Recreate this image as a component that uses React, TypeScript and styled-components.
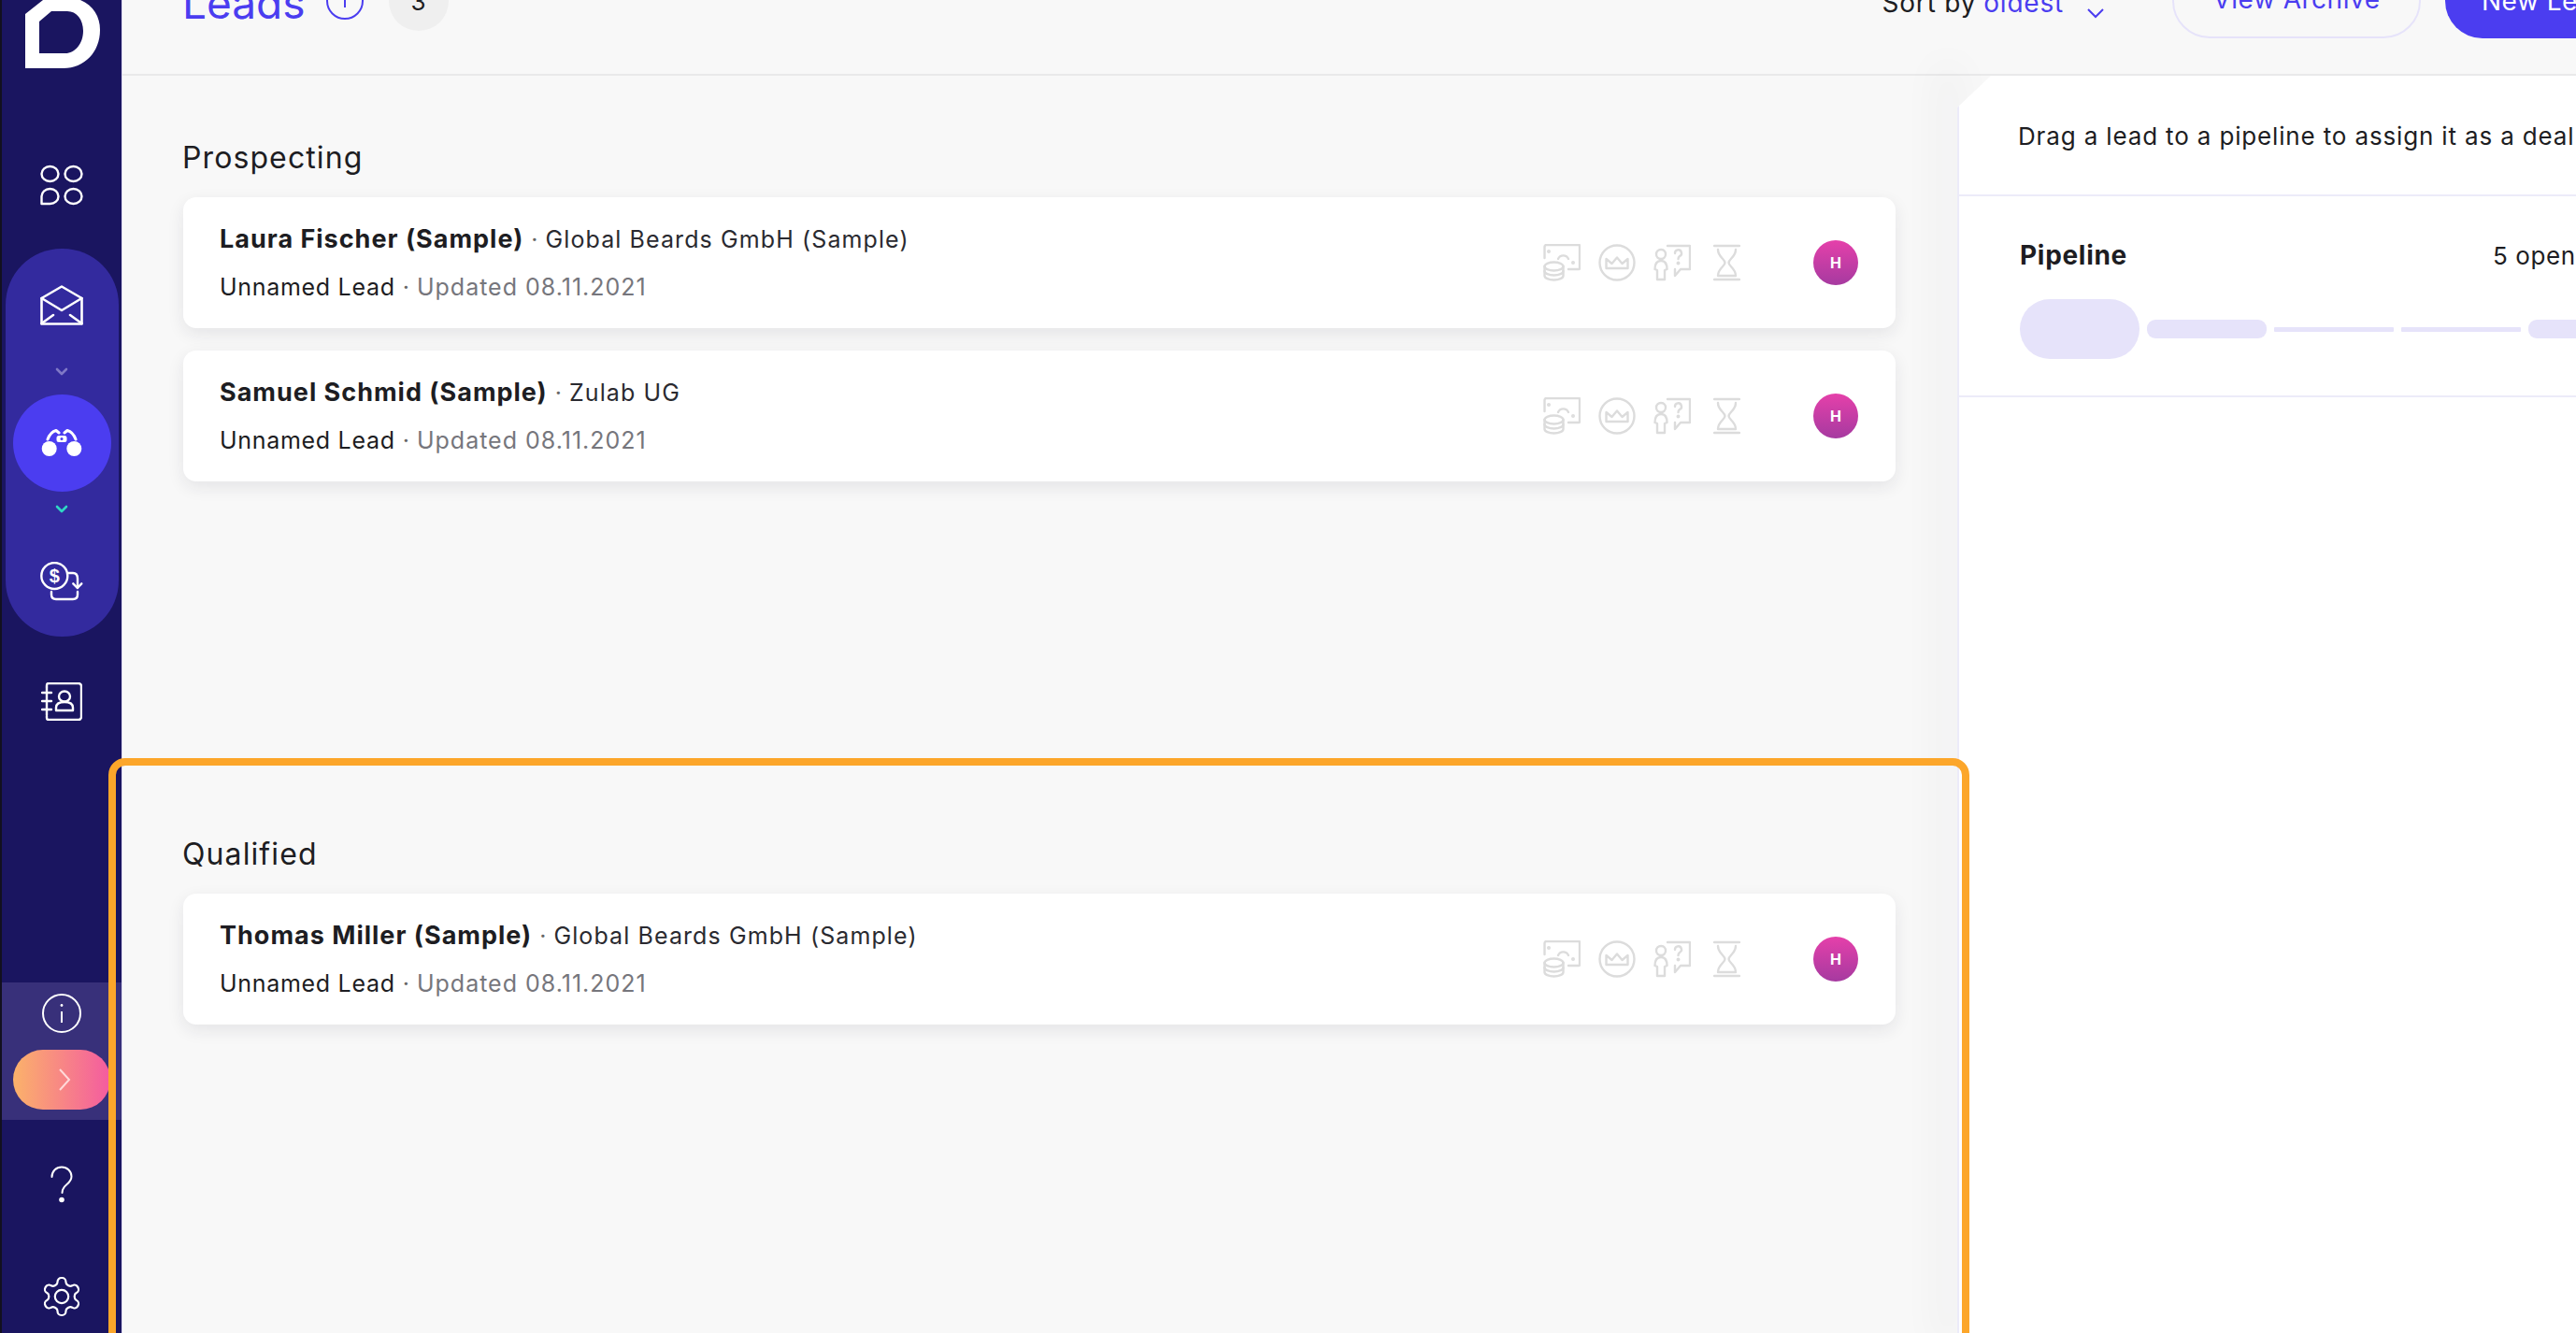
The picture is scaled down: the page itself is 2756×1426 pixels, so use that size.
import React from "react";
import styled, { createGlobalStyle } from "styled-components";

const Global = createGlobalStyle`
  html, body { margin: 0; padding: 0; height: 100%; overflow: hidden; background: #f8f8f8; }
  #root { height: 100%; }
  * { box-sizing: border-box; }
`;

const Page = styled.div`
  position: relative;
  display: flex;
  width: 2756px;
  height: 1426px;
  overflow: hidden;
  font-family: "Inter", "Liberation Sans", sans-serif;
  color: #1d1d22;
`;

const Sidebar = styled.aside`
  flex: 0 0 131px;
  display: flex;
  flex-direction: column;
  align-items: center;
  background: #1a1560;
  border-left: 2px solid #12101f;
  border-right: 1px solid #dcdaf0;
`;

const Slot = styled.div<{ $mt?: number }>`
  display: flex;
  justify-content: center;
  align-items: center;
  margin-top: ${(p) => p.$mt ?? 0}px;
  color: #fff;
  flex: none;
`;

const NavPill = styled.div`
  margin-top: 46px;
  width: 121px;
  height: 415px;
  padding-top: 39px;
  border-radius: 60px;
  background: #332a9e;
  display: flex;
  flex-direction: column;
  align-items: center;
`;

const ActiveCircle = styled.div`
  margin-top: 19px;
  width: 105px;
  height: 104px;
  border-radius: 50%;
  background: #4b3df0;
  display: flex;
  align-items: center;
  justify-content: center;
  color: #fff;
`;

const Band = styled.div`
  margin-top: auto;
  width: 100%;
  height: 147px;
  padding-top: 12px;
  background: #38307a;
  display: flex;
  flex-direction: column;
  align-items: center;
`;

const Gradient = styled.div`
  margin-top: 18px;
  width: 104px;
  height: 64px;
  padding-left: 6px;
  border-radius: 32px;
  background: linear-gradient(90deg, #fbb26a 0%, #f45ba0 100%);
  display: flex;
  align-items: center;
  justify-content: center;
`;

const SidebarFoot = styled.div`
  padding-bottom: 15px;
  display: flex;
  flex-direction: column;
  align-items: center;
`;

const Main = styled.div`
  flex: 1;
  display: flex;
  flex-direction: column;
  min-width: 0;
`;

const Header = styled.header`
  flex: 0 0 81px;
  height: 81px;
  border-bottom: 2px solid #e9e9ea;
  display: flex;
  align-items: flex-end;
  padding: 0 0 39px 64px;
`;

const Title = styled.div`
  display: flex;
  align-items: flex-end;
  flex: 1;
`;

const LeadsTitle = styled.h1`
  margin: 0 0 12px 0;
  font-size: 46px;
  line-height: 50px;
  font-weight: 400;
  color: #4b3df0;
`;

const InfoRing = styled.span`
  margin: 0 0 19px 22px;
  width: 40px;
  height: 40px;
  border: 2px solid #4b3df0;
  border-radius: 50%;
  display: flex;
  align-items: center;
  justify-content: center;
`;

const Count = styled.span`
  margin: 0 0 7px 27px;
  width: 64px;
  height: 64px;
  border-radius: 50%;
  background: #efefef;
  font-size: 26px;
  display: flex;
  align-items: flex-start;
  justify-content: center;
  padding-top: 17px;
`;

const Sort = styled.div`
  display: flex;
  align-items: flex-end;
  font-size: 28px;
  letter-spacing: 0.8px;
  line-height: 34px;
  margin-right: 72px;
  margin-bottom: 20px;
  gap: 8px;
  white-space: nowrap;
`;

const SortValue = styled.span`
  color: #4b3df0;
`;

const SortChevron = styled.svg`
  margin: 0 0 0 16px;
`;

const GhostButton = styled.div`
  width: 266px;
  height: 80px;
  margin-bottom: -1px;
  border-radius: 40px;
  border: 2px solid #e6e3fa;
  color: #4b3df0;
  font-size: 28px;
  letter-spacing: 0.5px;
  display: flex;
  align-items: flex-end;
  justify-content: center;
  padding-bottom: 23px;
`;

const PrimaryButton = styled.div`
  width: 140px;
  height: 80px;
  margin: 0 0 -1px 26px;
  border-radius: 40px 0 0 40px;
  background: #4b3df0;
  color: #fff;
  font-size: 28px;
  letter-spacing: 0.5px;
  display: flex;
  align-items: flex-end;
  padding: 0 0 23px 39px;
  white-space: nowrap;
  overflow: hidden;
`;

const Body = styled.div`
  flex: 1;
  display: flex;
  min-height: 0;
`;

const Lists = styled.div`
  flex: 0 0 1963px;
  padding: 68px 66px 0 65px;
`;

const Section = styled.section<{ $h: number }>`
  height: ${(p) => p.$h}px;
`;

const SectionTitle = styled.h2`
  margin: 0 0 22px -1px;
  font-size: 32px;
  letter-spacing: 1.1px;
  line-height: 40px;
  font-weight: 400;
  color: #1d1d22;
`;

const Card = styled.article`
  height: 140px;
  margin-bottom: 24px;
  padding: 0 40px 0 39px;
  background: #fff;
  border-radius: 14px;
  box-shadow: 0 6px 18px rgba(30, 30, 60, 0.09);
  display: flex;
  align-items: center;
`;

const CardText = styled.div`
  flex: 1;
  min-width: 0;
`;

const Line = styled.div<{ $mt?: number }>`
  display: flex;
  align-items: baseline;
  white-space: nowrap;
  margin-top: ${(p) => p.$mt ?? 0}px;
  line-height: 34px;
`;

const Name = styled.span`
  font-size: 27px;
  font-weight: 700;
  letter-spacing: 1px;
  color: #1d1d22;
`;

const Company = styled.span`
  font-size: 25px;
  letter-spacing: 1.1px;
  color: #2a2a30;
`;

const Sep = styled.span`
  font-size: 25px;
  color: #666;
  margin: 0 8px;
`;

const Muted = styled.span`
  font-size: 25px;
  letter-spacing: 1px;
  color: #76767c;
`;

const Plain = styled.span`
  font-size: 25px;
  letter-spacing: 0.7px;
  color: #1d1d22;
`;

const CardIcons = styled.div`
  display: flex;
  align-items: center;
  gap: 19px;
  color: #dcdcdc;
  margin-right: 78px;
  & > svg:last-child {
    margin-left: 5px;
  }
`;

const Avatar = styled.div`
  width: 48px;
  height: 48px;
  border-radius: 50%;
  background: linear-gradient(180deg, #e540aa 0%, #a63aa0 100%);
  color: #fff;
  font-size: 16px;
  font-weight: 700;
  display: flex;
  align-items: center;
  justify-content: center;
`;

const Panel = styled.aside`
  flex: 1;
  min-width: 0;
  overflow: hidden;
  background: #fff;
  border-left: 2px solid #ecebf9;
  clip-path: polygon(36px 0, 100% 0, 100% 100%, 0 100%, 0 34px);
`;

const PanelShade = styled.div`
  flex: 0 0 0;
  box-shadow: -10px 0 40px 14px rgba(40, 40, 60, 0.035);
`;

const DragHint = styled.div`
  height: 129px;
  border-bottom: 2px solid #ecebf9;
  padding: 45px 0 0 63px;
  font-size: 26px;
  letter-spacing: 0.85px;
  line-height: 40px;
  white-space: nowrap;
`;

const Pipeline = styled.div`
  height: 215px;
  border-bottom: 2px solid #ecebf9;
  padding: 43px 0 0 65px;
`;

const PipelineHead = styled.div`
  display: flex;
  white-space: nowrap;
  align-items: baseline;
  line-height: 40px;
`;

const PipelineName = styled.span`
  font-size: 28px;
  font-weight: 700;
  letter-spacing: 0.7px;
  width: 506px;
`;

const OpenCount = styled.span`
  font-size: 26px;
  letter-spacing: 0.6px;
`;

const Stages = styled.div`
  margin-top: 26px;
  display: flex;
  align-items: center;
  gap: 8px;
  height: 64px;
`;

const Stage = styled.div<{ $k: "lg" | "md" | "sm" }>`
  flex: none;
  background: #e6e3fa;
  width: 128px;
  height: ${(p) => (p.$k === "lg" ? 64 : p.$k === "md" ? 20 : 5)}px;
  border-radius: ${(p) => (p.$k === "lg" ? 32 : p.$k === "md" ? 9 : 1)}px;
`;

const Highlight = styled.div`
  position: absolute;
  left: 116px;
  top: 811px;
  width: 1991px;
  height: 700px;
  border: 8px solid #fca62a;
  border-radius: 18px;
  pointer-events: none;
`;

const Ico = { fill: "none", stroke: "currentColor", strokeWidth: 2.4, strokeLinecap: "round", strokeLinejoin: "round" } as const;
const Thin = { ...Ico, strokeWidth: 2 };

const Logo = () => (
  <svg width="81" height="74" viewBox="0 0 81 74">
    <path
      fillRule="evenodd"
      fill="#fff"
      d="M1 15L20 0H60C74 6 81 18 81 32C81 56 64 73 42 73H1ZM16 23V57H44C54 57 63 47 63 33C63 21 56 12 46 12H29Z"
    />
  </svg>
);

const AppsIcon = () => (
  <svg width="46" height="44" viewBox="0 0 46 44" {...Ico}>
    <ellipse cx="10.5" cy="10" rx="9" ry="8" />
    <ellipse cx="35.5" cy="10" rx="9" ry="8" />
    <path d="M1.5 42V34c0-4.5 4-8 9-8s9 3.5 9 8-4 8-9 8Z" />
    <ellipse cx="35.5" cy="34" rx="9" ry="8" />
  </svg>
);

const MailIcon = () => (
  <svg width="46" height="43" viewBox="0 0 46 43" {...Ico} strokeWidth="2.6">
    <path d="M1.5 14 23 1.5 44.5 14V41.5H1.5Z" />
    <path d="M1.5 14 23 27 44.5 14" />
    <path d="M1.5 41 14 32 M44.5 41 32 32" />
  </svg>
);

const Binoculars = () => (
  <svg width="44" height="30" viewBox="0 0 44 30">
    <circle cx="8.7" cy="21" r="8" fill="#fff" />
    <circle cx="35.3" cy="21" r="8" fill="#fff" />
    <path d="M7 11Q10 3 16 1.5L19 4M37 11Q34 3 28 1.5L25 4" {...Ico} strokeWidth="3" />
    <rect x="16.5" y="7" width="11" height="7" rx="2.5" fill="#fff" />
    <circle cx="22" cy="10.5" r="1.5" fill="#4b3df0" />
  </svg>
);

const DollarIcon = () => (
  <svg width="46" height="42" viewBox="0 0 46 42" {...Ico}>
    <circle cx="15.3" cy="15" r="14" />
    <text x="15.3" y="22" textAnchor="middle" fontFamily="Liberation Sans" fontWeight="700" fontSize="20" fill="currentColor" stroke="none">$</text>
    <path d="M30 12h5c3 0 5 2 5 6v10" />
    <path d="M35.3 23.3 39.8 28l4.5-4.7" />
    <path d="M12 32v3c0 3 2 5 5 5h18c3 0 5-2 5-5v-3" />
  </svg>
);

const ContactsIcon = () => (
  <svg width="44" height="41" viewBox="0 0 44 41" {...Thin} strokeWidth="2.4">
    <path d="M6 5V3a2 2 0 0 1 2-2h32a3 3 0 0 1 3 3v33a3 3 0 0 1-3 3H8a2 2 0 0 1-2-2v-2" />
    <path d="M6 5v30" />
    <path d="M1 11h10M1 20h10M1 29h10" />
    <ellipse cx="25" cy="15" rx="6" ry="5.5" />
    <path d="M16 30v-3c0-4 3-6 9-6s9 2 9 6v3Z" />
  </svg>
);

const InfoIcon = () => (
  <svg width="42" height="42" viewBox="0 0 42 42" {...Thin}>
    <circle cx="21" cy="21" r="20" />
    <path d="M21 19v12" strokeLinecap="butt" />
    <circle cx="21" cy="12.5" r="1.4" fill="currentColor" stroke="none" />
  </svg>
);

const QuestionIcon = () => (
  <svg width="24" height="40" viewBox="0 0 24 40" {...Thin}>
    <path d="M1.5 12C1.5 6 6 1.5 12 1.5S22.5 6 22.5 11.5c0 4-2 6-5 8.5-3 2.5-5 4.5-5 9" />
    <circle cx="12" cy="36.5" r="2.8" fill="currentColor" stroke="none" />
  </svg>
);

const GearIcon = () => (
  <svg width="48" height="48" viewBox="0 0 24 24" fill="none" stroke="currentColor" strokeWidth="1.1" strokeLinecap="round" strokeLinejoin="round">
    <path d="M12.22 2h-.44a2 2 0 0 0-2 2v.18a2 2 0 0 1-1 1.73l-.43.25a2 2 0 0 1-2 0l-.15-.08a2 2 0 0 0-2.73.73l-.22.38a2 2 0 0 0 .73 2.73l.15.1a2 2 0 0 1 1 1.72v.51a2 2 0 0 1-1 1.74l-.15.09a2 2 0 0 0-.73 2.73l.22.38a2 2 0 0 0 2.73.73l.15-.08a2 2 0 0 1 2 0l.43.25a2 2 0 0 1 1 1.73V20a2 2 0 0 0 2 2h.44a2 2 0 0 0 2-2v-.18a2 2 0 0 1 1-1.73l.43-.25a2 2 0 0 1 2 0l.15.08a2 2 0 0 0 2.73-.73l.22-.39a2 2 0 0 0-.73-2.73l-.15-.08a2 2 0 0 1-1-1.74v-.5a2 2 0 0 1 1-1.74l.15-.09a2 2 0 0 0 .73-2.73l-.22-.38a2 2 0 0 0-2.73-.73l-.15.08a2 2 0 0 1-2 0l-.43-.25a2 2 0 0 1-1-1.73V4a2 2 0 0 0-2-2z" />
    <circle cx="12" cy="12" r="3.6" />
  </svg>
);

const Chevron = ({ color }: { color: string }) => (
  <svg width="14" height="10" viewBox="0 0 14 10" fill="none" stroke={color} strokeWidth="2.6" strokeLinecap="round" strokeLinejoin="round">
    <path d="M2 2l5 5 5-5" />
  </svg>
);

const MoneyIcon = () => (
  <svg width="40" height="40" viewBox="0 0 40 40" {...Ico}>
    <path d="M1.5 15V3a2 2 0 0 1 2-2H38a1 1 0 0 1 1 1V26a1 1 0 0 1-1 1H27" />
    <path d="M16 16a6 6 0 0 1 11 0" />
    <circle cx="6" cy="8" r=".8" fill="currentColor" />
    <circle cx="32" cy="20" r=".8" fill="currentColor" />
    <ellipse cx="11.5" cy="24" rx="10" ry="4.5" />
    <path d="M1.5 24v10c0 2.5 4.5 4.5 10 4.5s10-2 10-4.5V24" />
    <path d="M1.5 29c0 2.5 4.5 4.5 10 4.5s10-2 10-4.5" />
  </svg>
);

const CrownIcon = () => (
  <svg width="40" height="40" viewBox="0 0 40 40" {...Ico}>
    <circle cx="20" cy="20" r="18.5" />
    <path d="M8.5 16l6 5 5.5-6.5 5.5 6.5 6-5v10H8.5Z" />
  </svg>
);

const AskIcon = () => (
  <svg width="40" height="40" viewBox="0 0 40 40" {...Ico}>
    <circle cx="8" cy="11" r="5" />
    <path d="M1.5 27c0-6 2.5-9 6.5-9s6.5 3 6.5 9l-2.5 1v10H4V28Z" />
    <path d="M15 2h24v25H29l-6 7v-7" />
    <path d="M23 10a3.500 3.500 0 1 1 5 3c-1 .8-1.500 1.500-1.500 3" />
    <circle cx="26.5" cy="20.5" r=".8" fill="currentColor" />
  </svg>
);

const HourglassIcon = () => (
  <svg width="29" height="40" viewBox="0 0 29 40" {...Ico}>
    <path d="M1 2h27M1 38h27" />
    <path d="M5 6c0 8 7.500 10 7.500 14S5 26 5 34h19c0-8-7.500-10-7.500-14S24 14 24 6" />
  </svg>
);

type Lead = { name: string; company: string };

const LeadCard = ({ name, company }: Lead) => (
  <Card>
    <CardText>
      <Line>
        <Name>{name}</Name>
        <Sep>·</Sep>
        <Company>{company}</Company>
      </Line>
      <Line $mt={17}>
        <Plain>Unnamed Lead</Plain>
        <Sep>·</Sep>
        <Muted>Updated 08.11.2021</Muted>
      </Line>
    </CardText>
    <CardIcons>
      <MoneyIcon />
      <CrownIcon />
      <AskIcon />
      <HourglassIcon />
    </CardIcons>
    <Avatar>H</Avatar>
  </Card>
);

const sections: { title: string; height: number; leads: Lead[] }[] = [
  {
    title: "Prospecting",
    height: 745,
    leads: [
      { name: "Laura Fischer (Sample)", company: "Global Beards GmbH (Sample)" },
      { name: "Samuel Schmid (Sample)", company: "Zulab UG" },
    ],
  },
  {
    title: "Qualified",
    height: 500,
    leads: [{ name: "Thomas Miller (Sample)", company: "Global Beards GmbH (Sample)" }],
  },
];

export default function App() {
  return (
    <Page>
      <Global />
      <Sidebar>
        <Slot><Logo /></Slot>
        <Slot $mt={102}><AppsIcon /></Slot>
        <NavPill>
          <Slot><MailIcon /></Slot>
          <Slot $mt={45}><Chevron color="#7f78c6" /></Slot>
          <ActiveCircle><Binoculars /></ActiveCircle>
          <Slot $mt={14}><Chevron color="#2fd6c4" /></Slot>
          <Slot $mt={51}><DollarIcon /></Slot>
        </NavPill>
        <Slot $mt={49}><ContactsIcon /></Slot>
        <Band>
          <Slot><InfoIcon /></Slot>
          <Gradient>
            <svg width="14" height="26" viewBox="0 0 14 26" fill="none" stroke="#ffd9d9" strokeWidth="2">
              <path d="M2 2l10 11L2 24" />
            </svg>
          </Gradient>
        </Band>
        <SidebarFoot>
          <Slot $mt={49}><QuestionIcon /></Slot>
          <Slot $mt={76}><GearIcon /></Slot>
        </SidebarFoot>
      </Sidebar>
      <Main>
        <Header>
          <Title>
            <LeadsTitle>Leads</LeadsTitle>
            <InfoRing>
              <svg width="4" height="14" viewBox="0 0 4 14"><path d="M2 0v14" stroke="#4b3df0" strokeWidth="2" /></svg>
            </InfoRing>
            <Count>3</Count>
          </Title>
          <Sort>
            <span>Sort by</span>
            <SortValue>oldest</SortValue>
            <SortChevron width="20" height="12" viewBox="0 0 20 12" fill="none" stroke="#4b3df0" strokeWidth="2"><path d="M2 2l8 8 8-8" /></SortChevron>
          </Sort>
          <GhostButton>View Archive</GhostButton>
          <PrimaryButton>New Lead</PrimaryButton>
        </Header>
        <Body>
          <Lists>
            {sections.map((s) => (
              <Section key={s.title} $h={s.height}>
                <SectionTitle>{s.title}</SectionTitle>
                {s.leads.map((l) => (
                  <LeadCard key={l.name} {...l} />
                ))}
              </Section>
            ))}
          </Lists>
          <PanelShade />
          <Panel>
            <DragHint>Drag a lead to a pipeline to assign it as a deal</DragHint>
            <Pipeline>
              <PipelineHead>
                <PipelineName>Pipeline</PipelineName>
                <OpenCount>5 open</OpenCount>
              </PipelineHead>
              <Stages>
                <Stage $k="lg" />
                <Stage $k="md" />
                <Stage $k="sm" />
                <Stage $k="sm" />
                <Stage $k="md" />
              </Stages>
            </Pipeline>
          </Panel>
        </Body>
      </Main>
      <Highlight />
    </Page>
  );
}
